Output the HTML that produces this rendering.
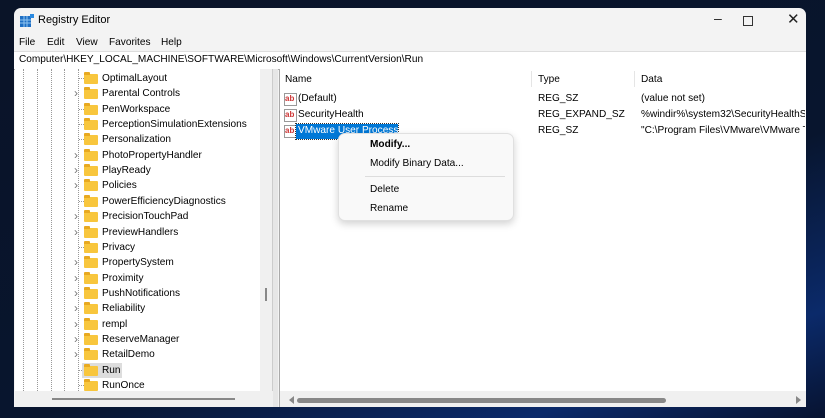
<!DOCTYPE html><html><head><style>
body{margin:0;width:825px;height:418px;overflow:hidden;background:linear-gradient(160deg,#0a1428 0%,#08152e 60%,#0b2a6a 85%,#071330 100%);font-family:"Liberation Sans",sans-serif;font-size:10.1px;color:#000;position:relative}
.win{position:absolute;left:14px;top:8px;width:792px;height:399px;background:#f3f3f3;border-radius:7px 7px 0 0;overflow:hidden}
.a{position:absolute;white-space:nowrap}
.dl{position:absolute;top:61px;height:330px;border-left:1px dotted #999}
.row{position:absolute;height:15px;line-height:15px}
.fold{position:absolute;width:14px;height:10px;background:#f8c63d;border-radius:1px;top:3px}
.fold:before{content:"";position:absolute;left:0;top:-2px;width:6px;height:3px;background:#e8a920;border-radius:1px 1px 0 0}
.chev{position:absolute;color:#777;font-size:12px}
.ab{position:absolute;width:11px;height:11px;border:1px solid #999;background:#fff;color:#c33;font-size:8px;font-weight:bold;line-height:9px;text-align:left}
</style></head><body>
<div class="win">
 <svg class="a" style="left:6px;top:6px" width="14" height="13"><rect x="0" y="2" width="11" height="11" fill="#1f6fc4"/><path d="M0 6h11M0 9h11M4 2v11M7 2v11" stroke="#8fc4f0" stroke-width="1"/><rect x="10" y="0" width="4" height="4" fill="#2a8ae0"/></svg>
 <div class="a" style="left:24px;top:6px;font-size:11px">Registry Editor</div>
 <div class="a" style="left:700px;top:2px;font-size:14px;color:#222">&#8211;</div>
 <div class="a" style="left:729px;top:8px;width:8px;height:8px;border:1px solid #333"></div>
 <div class="a" style="left:773px;top:2px;font-size:15px;color:#222">&#10005;</div>
 <div class="a" style="left:5px;top:29px">File</div><div class="a" style="left:33px;top:29px">Edit</div><div class="a" style="left:62px;top:29px">View</div><div class="a" style="left:95px;top:29px">Favorites</div><div class="a" style="left:147px;top:29px">Help</div>
 <div class="a" style="left:0;top:43px;width:792px;height:17px;background:#fff;border-top:1px solid #ddd;border-bottom:1px solid #aaa"></div>
 <div class="a" style="left:5px;top:46px">Computer\HKEY_LOCAL_MACHINE\SOFTWARE\Microsoft\Windows\CurrentVersion\Run</div>
 <div class="a" style="left:1px;top:61px;width:257px;height:338px;background:#fff;border-right:1px solid #ccc"></div>
 <div class="a" style="left:246px;top:61px;width:12px;height:322px;background:#f0f0f0"></div>
 <div class="a" style="left:251px;top:280px;width:2px;height:13px;background:#888"></div>
 <div class="a" style="left:1px;top:383px;width:258px;height:16px;background:#f0f0f0"></div>
 <div class="a" style="left:38px;top:390px;width:183px;height:2px;background:#888"></div>
 <div class="dl" style="left:9px;height:322px"></div><div class="dl" style="left:23px;height:322px"></div><div class="dl" style="left:37px;height:322px"></div><div class="dl" style="left:50px;height:322px"></div><div class="dl" style="left:64px;height:322px"></div>
 <div id="tree"></div>
 <div class="a" style="left:259px;top:61px;width:5px;height:338px;background:#e6e6e6"></div>
 <div class="a" style="left:265px;top:61px;width:527px;height:338px;background:#fff;border-left:1px solid #aaa"></div>
 <div class="a" style="left:517px;top:63px;height:16px;border-left:1px solid #e5e5e5"></div>
 <div class="a" style="left:620px;top:63px;height:16px;border-left:1px solid #e5e5e5"></div>
 <div class="a" style="left:271px;top:66px">Name</div><div class="a" style="left:524px;top:66px">Type</div><div class="a" style="left:627px;top:66px">Data</div>
 <div class="ab" style="left:270px;top:85px">ab</div><div class="a" style="left:284px;top:85px">(Default)</div><div class="a" style="left:524px;top:85px">REG_SZ</div><div class="a" style="left:627px;top:85px">(value not set)</div>
 <div class="ab" style="left:270px;top:101px">ab</div><div class="a" style="left:284px;top:101px">SecurityHealth</div><div class="a" style="left:524px;top:101px">REG_EXPAND_SZ</div><div class="a" style="left:627px;top:101px;width:164px;overflow:hidden">%windir%\system32\SecurityHealthSystray.exe</div>
 <div class="ab" style="left:270px;top:117px">ab</div><div class="a" style="left:282px;top:116px;width:102px;height:15px;background:#0078d7;outline:1px dotted #333"></div><div class="a" style="left:284px;top:117px;color:#fff">VMware User Process</div><div class="a" style="left:524px;top:117px">REG_SZ</div><div class="a" style="left:627px;top:117px;width:164px;overflow:hidden">"C:\Program Files\VMware\VMware Tools\vmtoolsd.exe"</div>
 <div class="a" style="left:266px;top:383px;width:526px;height:16px;background:#f0f0f0"></div>
 <div class="a" style="left:275px;top:388px;width:0;height:0;border:4px solid transparent;border-right:5px solid #888;border-left:0"></div>
 <div class="a" style="left:283px;top:390px;width:369px;height:5px;background:#888;border-radius:3px"></div>
 <div class="a" style="left:782px;top:388px;width:0;height:0;border:4px solid transparent;border-left:5px solid #888;border-right:0"></div>
 <div class="a" style="left:324px;top:125px;width:174px;height:86px;background:#f9f9f9;border:1px solid #e0e0e0;border-radius:7px;box-shadow:0 3px 8px rgba(0,0,0,.18)"></div>
 <div class="a" style="left:356px;top:131px;font-weight:bold">Modify...</div>
 <div class="a" style="left:356px;top:150px">Modify Binary Data...</div>
 <div class="a" style="left:351px;top:168px;width:140px;border-top:1px solid #ddd"></div>
 <div class="a" style="left:356px;top:176px">Delete</div>
 <div class="a" style="left:356px;top:195px">Rename</div>
</div>
<script>
var n=["OptimalLayout","Parental Controls","PenWorkspace","PerceptionSimulationExtensions","Personalization","PhotoPropertyHandler","PlayReady","Policies","PowerEfficiencyDiagnostics","PrecisionTouchPad","PreviewHandlers","Privacy","PropertySystem","Proximity","PushNotifications","Reliability","rempl","ReserveManager","RetailDemo","Run","RunOnce"];
var c=[0,1,0,0,0,1,1,1,0,1,1,0,1,1,1,1,1,1,1,0,0],h="";
for(var i=0;i<n.length;i++){var y=63+i*15.35;
h+=(c[i]?'<div class="chev a" style="left:60px;top:'+(y)+'px">&#8250;</div>':'<div class="a" style="left:65px;top:'+(y+7)+'px;width:5px;border-top:1px dotted #999"></div>');
if(i==19)h+='<div class="a" style="left:68px;top:'+(y)+'px;width:40px;height:15px;background:#ddd"></div>';
h+='<div class="row a" style="left:70px;top:'+y+'px"><div class="fold" style="left:0"></div><span style="position:absolute;left:18px">'+n[i]+'</span></div>';}
document.getElementById("tree").innerHTML=h;
</script>
</body></html>
